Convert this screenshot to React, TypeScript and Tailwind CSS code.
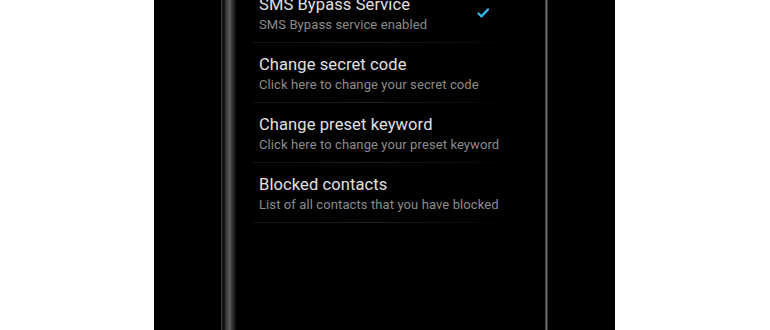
import React from 'react';

type Pref = { title: string; summary: string; checked?: boolean };

const prefs: Pref[] = [
  { title: 'SMS Bypass Service', summary: 'SMS Bypass service enabled', checked: true },
  { title: 'Change secret code', summary: 'Click here to change your secret code' },
  { title: 'Change preset keyword', summary: 'Click here to change your preset keyword' },
  { title: 'Blocked contacts', summary: 'List of all contacts that you have blocked' },
];

function Check() {
  return (
    <svg width="14" height="12" viewBox="0 0 14 12" className="shrink-0">
      <path d="M2.5 6.5 L5.5 9.4 L12 2.4" fill="none" stroke="#33b5e5" strokeWidth="2.3" strokeLinecap="round" strokeLinejoin="round" />
    </svg>
  );
}

export default function App() {
  return (
    <div className="flex h-[330px] w-[770px] overflow-hidden bg-white" style={{ fontFamily: 'Roboto, "Noto Sans", sans-serif' }}>
      <div className="w-[154px] shrink-0 bg-white" />
      <div className="flex w-[461px] shrink-0 bg-black">
        <div className="w-[67px] shrink-0" />
        {/* left bezel */}
        <div className="flex w-[15px] shrink-0">
          <div className="w-px bg-[#3e3e3e]" />
          <div className="w-[3px] bg-[#141414]" />
          <div className="w-[11px] bg-gradient-to-r from-[#2a2a2a] via-[#5c5c5c] via-40% to-[#0a0a0a]" />
        </div>
        {/* screen */}
        <div className="w-[309px] shrink-0 bg-black pl-[17px] pr-[53px]">
          <div className="-mt-[17px] flex flex-col">
            {prefs.map((p) => (
              <div key={p.title} className="relative flex h-[60px] items-start pl-[6px]">
                <div className="flex-1 pt-[12px]">
                  <div className="text-[16.5px] leading-[20px] tracking-[0.1px] text-[#e0e0e0] whitespace-nowrap">{p.title}</div>
                  <div className="mt-px text-[13px] leading-[18px] tracking-[0.1px] text-[#8c8c8c] whitespace-nowrap">{p.summary}</div>
                </div>
                {p.checked && (
                  <div className="pt-[24px] pr-[2px]">
                    <Check />
                  </div>
                )}
                <div className="absolute bottom-0 left-0 h-px w-[250px] bg-gradient-to-r from-[#141414] via-[#1c1c1c] to-[#050505]" />
              </div>
            ))}
          </div>
        </div>
        {/* right edge */}
        <div className="w-[3px] shrink-0 bg-gradient-to-r from-[#2a2a2a] via-[#707070] to-[#1a1a1a]" />
        <div className="flex-1" />
      </div>
      <div className="flex-1 bg-white" />
    </div>
  );
}
